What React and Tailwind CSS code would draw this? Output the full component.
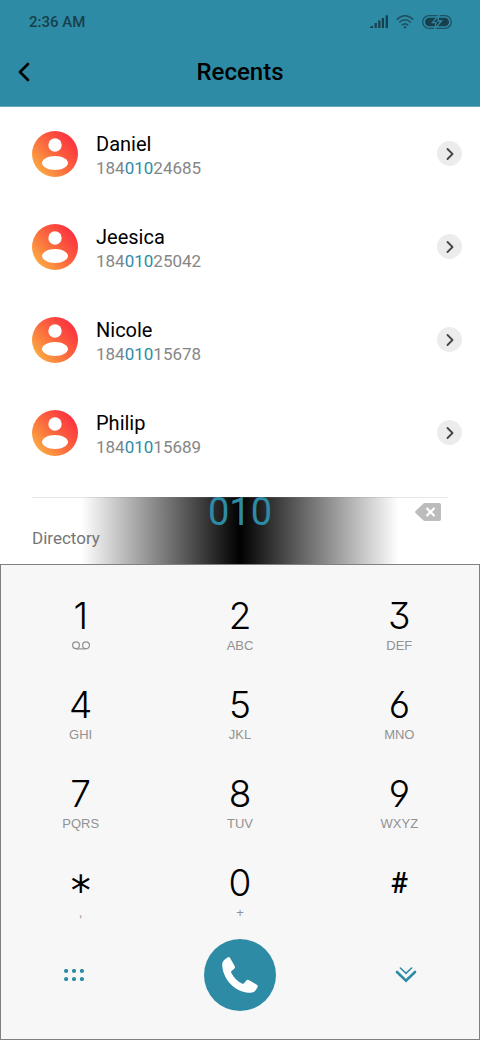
import React, { useState } from "react";
import { ChevronLeft, ChevronRight } from "lucide-react";

const MATCH = "010";

const contacts = [
  { name: "Daniel", number: "18401024685" },
  { name: "Jeesica", number: "18401025042" },
  { name: "Nicole", number: "18401015678" },
  { name: "Philip", number: "18401015689" },
];

const keys = [
  { digit: "1", voicemail: true },
  { digit: "2", letters: "ABC" },
  { digit: "3", letters: "DEF" },
  { digit: "4", letters: "GHI" },
  { digit: "5", letters: "JKL" },
  { digit: "6", letters: "MNO" },
  { digit: "7", letters: "PQRS" },
  { digit: "8", letters: "TUV" },
  { digit: "9", letters: "WXYZ" },
  { digit: "*", letters: "," },
  { digit: "0", letters: "+" },
  { digit: "#", letters: "" },
];

const keyFonts = {
  "*": "font-['DejaVu_Sans',sans-serif] text-[40px] pt-4",
  "#": "font-[Roboto,sans-serif] text-[29px] font-medium",
};

const StatusIcons = () => (
  <div className="flex items-center gap-2 text-[#173f4c]">
    <svg width="18" height="14" viewBox="0 0 18 14" fill="currentColor">
      <path d="M0 13V12L3 10.4V13Z" />
      <rect x="4.6" y="8" width="2.2" height="5" />
      <rect x="8.2" y="5.5" width="2.2" height="7.5" />
      <rect x="11.8" y="3" width="2.2" height="10" />
      <rect x="15.6" y="0.3" width="2.4" height="12.7" />
    </svg>
    <svg width="18" height="14" viewBox="0 0 18 14" fill="none" stroke="currentColor" strokeWidth="1.6" opacity="0.75">
      <path d="M.6 4.6Q9-3.2 17.4 4.6M3.2 7.5Q9 2 14.8 7.5M5.8 10.3Q9 7.4 12.2 10.3" />
      <circle cx="9" cy="12.2" r="1.2" fill="currentColor" stroke="none" />
    </svg>
    <svg width="30" height="14" viewBox="0 0 30 14" fill="none">
      <rect x="0.7" y="0.7" width="28.6" height="12.6" rx="6.3" stroke="currentColor" strokeWidth="1.3" opacity="0.75" />
      <rect x="3" y="2.8" width="24" height="8.4" rx="4.2" fill="currentColor" />
      <path d="M17 0L10.4 7.7H14L12.6 14L19.6 6H15.8Z" fill="currentColor" stroke="#2e8ba5" strokeWidth="1.3" />
    </svg>
  </div>
);

const Avatar = () => (
  <svg width="46" height="46" viewBox="0 0 46 46" className="shrink-0">
    <defs>
      <linearGradient id="avatar" x1="0.1" y1="0.85" x2="0.85" y2="0.2">
        <stop offset="0" stopColor="#fbaa42" />
        <stop offset="0.5" stopColor="#fb6a3e" />
        <stop offset="1" stopColor="#fb363f" />
      </linearGradient>
    </defs>
    <circle cx="23" cy="23" r="23" fill="url(#avatar)" />
    <circle cx="23" cy="14" r="6.7" fill="#fff" />
    <path d="M10 32C10 28.5 15.5 25 23 25S36 28.5 36 32S30.5 39 23 39S10 35.5 10 32Z" fill="#fff" />
  </svg>
);

const Voicemail = () => (
  <svg width="18" height="9" viewBox="0 0 18 9" fill="none" stroke="#929292" strokeWidth="1.2">
    <circle cx="4" cy="4.2" r="3.4" />
    <circle cx="14" cy="4.2" r="3.4" />
    <path d="M4 7.9H14" />
  </svg>
);

const ContactRow = ({ contact }) => {
  const [before, after] = contact.number.split(MATCH);

  return (
    <li className="flex h-[93px] items-center pl-8 pr-[18px]">
      <Avatar />
      <div className="ml-[18px] flex-1 pt-1">
        <p className="text-[20px] leading-6 text-black">{contact.name}</p>
        <p className="text-[17px] leading-6 text-[#868686]">
          {before}
          <span className="text-[#2e8ba5]">{MATCH}</span>
          {after}
        </p>
      </div>
      <button
        aria-label={`Details for ${contact.name}`}
        className="flex size-[25px] items-center justify-center rounded-full bg-[#ececec] text-[#454545]"
      >
        <ChevronRight size={20} strokeWidth={2.2} />
      </button>
    </li>
  );
};

const Key = ({ item, onPress }) => (
  <button
    onClick={() => onPress(item.digit)}
    className="flex h-[89px] flex-col items-center justify-center"
  >
    <span
      className={`flex h-10 items-center justify-center leading-10 text-black ${
        keyFonts[item.digit] ||
        "font-[Inter,sans-serif] text-[37px] font-light [font-feature-settings:'cv03','cv04','cv09']"
      }`}
    >
      {item.digit}
    </span>
    <span className="flex h-5 items-center font-['Liberation_Sans',sans-serif] text-[13px] leading-5 text-[#929292]">
      {item.voicemail ? <Voicemail /> : item.letters}
    </span>
  </button>
);

const App = () => {
  const [number, setNumber] = useState(MATCH);

  return (
    <div className="flex min-h-screen flex-col bg-white font-[Roboto,sans-serif]">
      <header className="border-b border-[#5fa9bd] bg-[#2e8ba5] pb-1.5">
        <div className="flex h-11 items-center justify-between pl-[29px] pr-7">
          <span className="text-[15px] font-medium text-[#173f4c]">2:36 AM</span>
          <StatusIcons />
        </div>
        <div className="grid h-14 grid-cols-[48px_1fr_48px] items-center">
          <button aria-label="Back" className="flex h-12 items-center justify-center text-black">
            <ChevronLeft size={32} strokeWidth={2} />
          </button>
          <h1 className="text-center text-[24px] font-medium text-black">Recents</h1>
        </div>
      </header>

      <ul className="pb-[18px]">
        {contacts.map((contact) => (
          <ContactRow key={contact.number} contact={contact} />
        ))}
      </ul>

      <section className="bg-[linear-gradient(90deg,transparent_17%,#000_50%,transparent_83%)] pb-[14px]">
        <div className="mx-8 border-t border-[#808080]/20" />
        <div className="grid grid-cols-[1fr_120px_1fr] grid-rows-[28px] items-center">
          <input
            type="text"
            aria-label="Number"
            value={number}
            onChange={(e) => setNumber(e.target.value)}
            className="col-start-2 h-10 w-full bg-transparent text-center text-[38px] leading-10 text-[#2e8ba5] outline-none"
          />
          <button
            aria-label="Delete"
            onClick={() => setNumber(number.slice(0, -1))}
            className="mr-[39px] justify-self-end"
          >
            <svg width="26" height="18" viewBox="0 0 26 18">
              <path
                d="M8.2.7Q9 0 10 0H24Q26 0 26 2V16Q26 18 24 18H10Q9 18 8.2 17.3L.6 10Q-.3 9 .6 8Z"
                fill="#bcbcbc"
              />
              <path d="M11.5 5L19.5 13M19.5 5L11.5 13" stroke="#fff" strokeWidth="2.2" />
            </svg>
          </button>
        </div>
        <p className="pl-8 text-[17px] leading-6 text-[#757575]">Directory</p>
      </section>

      <section className="flex-1 border border-[#808080] bg-[#f7f7f7] pb-7 pt-4">
        <div className="grid grid-cols-3">
          {keys.map((item) => (
            <Key key={item.digit} item={item} onPress={(d) => setNumber(number + d)} />
          ))}
        </div>
        <div className="mt-0.5 flex items-center justify-between px-[49px]">
          <button aria-label="Menu" className="flex size-12 items-center justify-center">
            <svg width="20" height="12" viewBox="0 0 20 12" fill="#2e8ba5">
              {[2.1, 10, 17.9].map((x) => (
                <React.Fragment key={x}>
                  <circle cx={x} cy="2" r="2.1" />
                  <circle cx={x} cy="10" r="2.1" />
                </React.Fragment>
              ))}
            </svg>
          </button>
          <button
            aria-label="Call"
            className="flex size-[72px] items-center justify-center rounded-full bg-[#2e8ba5]"
          >
            <svg width="36" height="36" viewBox="0 0 36 36" fill="#fff">
              <path d="M5.6.4Q7.2-.5 8.2 1.2L12.8 9.3Q13.4 10.6 12.4 11.6L9.6 14Q8.6 15 9.4 16C11.8 20.5 15 24 19.8 26.6Q21 27.2 22 26.2L24.4 23.4Q25.4 22.4 26.7 23.1L34.8 27.7Q36.4 28.7 35.5 30.3Q33 35.8 29 35.8C13 35.8 .2 22 .2 7Q.5 3 5.6.4Z" />
            </svg>
          </button>
          <button aria-label="Hide keypad" className="flex size-12 items-center justify-center">
            <svg
              width="22"
              height="16"
              viewBox="0 0 22 16"
              fill="none"
              stroke="#2e8ba5"
              strokeLinecap="round"
            >
              <path d="M5.4 1L11 6.4L16.6 1" strokeWidth="1.6" />
              <path d="M2 5L11 13.8L20 5" strokeWidth="2.6" />
            </svg>
          </button>
        </div>
      </section>
    </div>
  );
};

export default App;
